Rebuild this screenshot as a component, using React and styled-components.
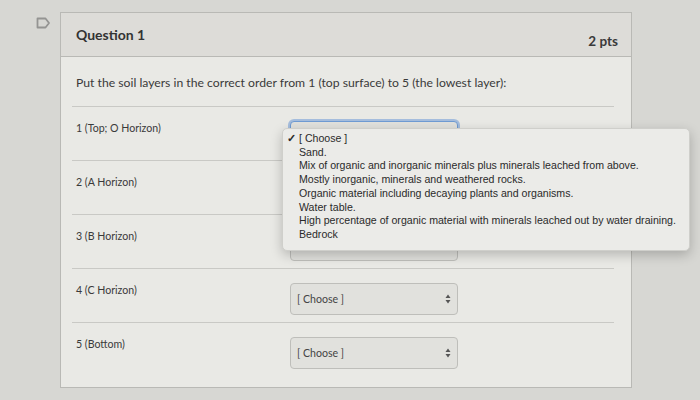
import React from "react";
import styled, { createGlobalStyle } from "styled-components";

const rows = [
  { label: "1 (Top; O Horizon)", open: true },
  { label: "2 (A Horizon)" },
  { label: "3 (B Horizon)" },
  { label: "4 (C Horizon)" },
  { label: "5 (Bottom)" },
];

const options = [
  "[ Choose ]",
  "Sand.",
  "Mix of organic and inorganic minerals plus minerals leached from above.",
  "Mostly inorganic, minerals and weathered rocks.",
  "Organic material including decaying plants and organisms.",
  "Water table.",
  "High percentage of organic material with minerals leached out by water draining.",
  "Bedrock",
];

const FlagIcon = () => (
  <svg width="15" height="12" viewBox="0 0 15 12" fill="none">
    <path
      d="M1.5 1.5 H9.5 L13 6 L9.5 10.5 H1.5 Z"
      stroke="#949492"
      strokeWidth="1.8"
      strokeLinejoin="round"
    />
  </svg>
);

const Arrows = () => (
  <svg width="6" height="10" viewBox="0 0 6 10">
    <path d="M3 0.5 L5.5 4 H0.5 Z" fill="#555" />
    <path d="M3 9.5 L5.5 6 H0.5 Z" fill="#555" />
  </svg>
);

const App = () => {
  return (
    <>
      <GlobalStyle />
      <Page>
        <Gutter>
          <FlagIcon />
        </Gutter>
        <Card>
          <Header>
            <Title>Question 1</Title>
            <Points>2 pts</Points>
          </Header>
          <Body>
            <Prompt>
              Put the soil layers in the correct order from 1 (top surface) to 5
              (the lowest layer):
            </Prompt>
            {rows.map((row) => (
              <Row key={row.label}>
                <Label>{row.label}</Label>
                <SelectWrap>
                  <Select $focused={row.open}>
                    <span>[ Choose ]</span>
                    <Arrows />
                  </Select>
                  {row.open && (
                    <Menu>
                      {options.map((opt, i) => (
                        <MenuItem key={opt}>
                          {i === 0 && <Check>✓</Check>}
                          {opt}
                        </MenuItem>
                      ))}
                    </Menu>
                  )}
                </SelectWrap>
              </Row>
            ))}
          </Body>
        </Card>
      </Page>
    </>
  );
};

const GlobalStyle = createGlobalStyle`
  html, body {
    margin: 0;
    padding: 0;
    background: #d7d7d3;
    height: 100%;
  }
`;

const Page = styled.div`
  display: flex;
  align-items: flex-start;
  padding-top: 12px;
  height: 388px;
  font-family: Lato, "Noto Sans", sans-serif;
  color: #3a3a3a;
`;

const Gutter = styled.div`
  width: 60px;
  display: flex;
  justify-content: flex-end;
  padding: 5px 9px 0 0;
  box-sizing: border-box;
`;

const Card = styled.div`
  width: 572px;
  height: 376px;
  box-sizing: border-box;
  border: 1px solid #b9b9b5;
  background: #e9e9e5;
`;

const Header = styled.div`
  height: 44px;
  box-sizing: border-box;
  background: #dddcd8;
  border-bottom: 1px solid #b9b9b5;
  display: flex;
  justify-content: space-between;
  align-items: center;
  padding: 0 13px 0 15px;
`;

const Title = styled.h2`
  margin: 0;
  font-size: 14px;
  font-weight: 700;
  color: #333;
`;

const Points = styled.span`
  font-size: 13.5px;
  font-weight: 700;
  color: #3a3a3a;
  padding-top: 12px;
`;

const Body = styled.div`
  padding: 0 17px 0 11px;
`;

const Prompt = styled.p`
  margin: 0;
  padding: 18px 4px 15px;
  font-size: 12.2px;
  line-height: 16px;
`;

const Row = styled.div`
  display: flex;
  height: 53px;
  border-top: 1px solid #c9c9c5;
`;

const Label = styled.div`
  width: 218px;
  box-sizing: border-box;
  padding: 14px 0 0 4px;
  font-size: 10.6px;
  line-height: 14px;
  color: #3a3a3a;
`;

const SelectWrap = styled.div`
  position: relative;
  padding-top: 14px;
`;

const Select = styled.div`
  width: 168px;
  height: 32px;
  box-sizing: border-box;
  display: flex;
  align-items: center;
  justify-content: space-between;
  padding: 0 6px 0 6px;
  border-radius: 4px;
  background: #e1e1dd;
  border: 1px solid ${(p) => (p.$focused ? "#6f9bd3" : "#bebeba")};
  box-shadow: ${(p) =>
    p.$focused ? "0 0 0 2px rgba(120, 160, 215, 0.6)" : "none"};
  font-size: 10.6px;
  color: #444;
`;

const Menu = styled.div`
  position: absolute;
  top: 21px;
  left: -8px;
  width: 408px;
  box-sizing: border-box;
  padding: 3px 0 8px;
  border-radius: 5px;
  background: #ebebe8;
  border: 1px solid #cfcfcb;
  box-shadow: 0 4px 12px rgba(0, 0, 0, 0.22);
  font-family: "Liberation Sans", Arial, sans-serif;
  font-size: 10.6px;
  color: #2a2a2a;
  z-index: 5;
`;

const MenuItem = styled.div`
  position: relative;
  padding-left: 16px;
  line-height: 13.7px;
  white-space: nowrap;
`;

const Check = styled.span`
  position: absolute;
  left: 4px;
  top: 0;
  font-size: 11px;
  font-weight: 700;
`;

export default App;
